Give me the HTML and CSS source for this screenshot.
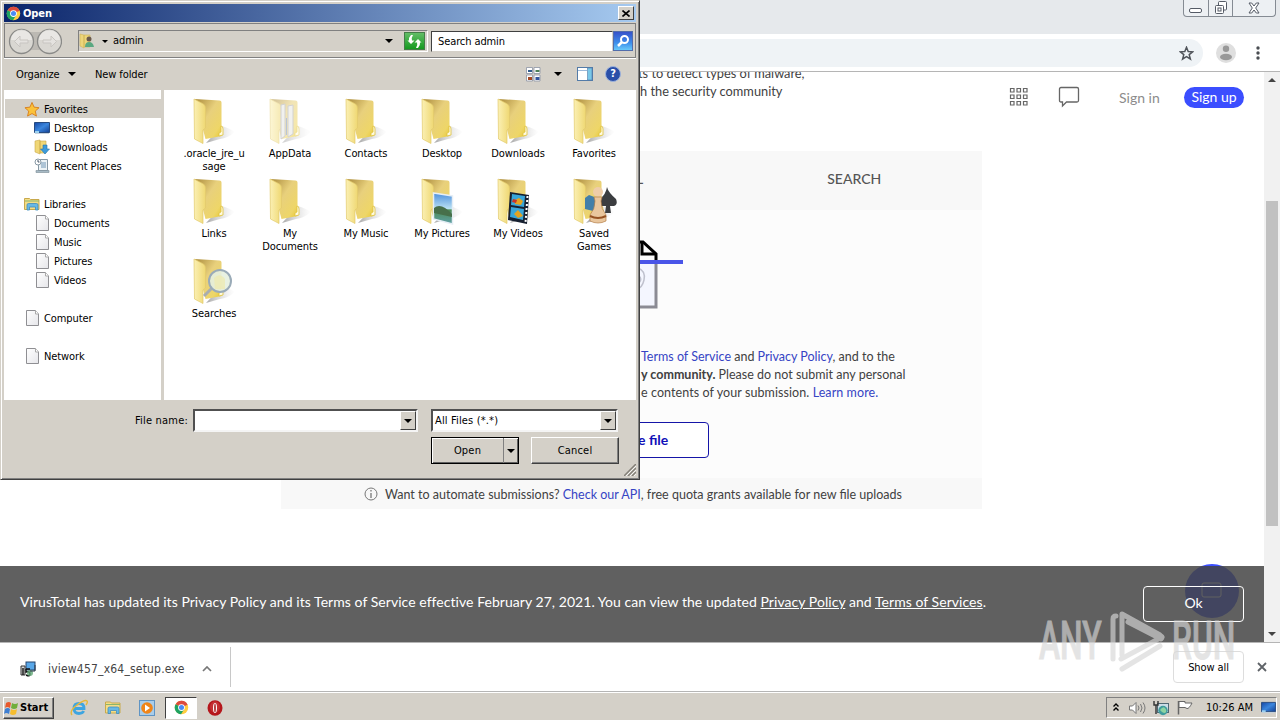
FILE: index.html
```html
<!DOCTYPE html>
<html>
<head>
	<meta charset="utf-8">
	<title>VirusTotal</title>
	<link rel="stylesheet" href="styles.css">
</head>
<body>
	<!-- shared icons -->
	<svg class="defs" width="0" height="0">
		<defs>
			<linearGradient id="gFront" x1="0" x2="1" y1="0" y2="0"><stop offset="0" stop-color="#fbf0b4"/><stop offset="1" stop-color="#efd873"/></linearGradient>
			<linearGradient id="gBack" x1="0" x2="1" y1="0" y2="1"><stop offset=".1" stop-color="#b89a4a"/><stop offset=".45" stop-color="#e8d07c"/><stop offset=".8" stop-color="#eed668"/><stop offset="1" stop-color="#e6c62e"/></linearGradient>
			<linearGradient id="gShade" x1="0" x2="1" y1="0" y2="0"><stop offset="0" stop-color="#888" stop-opacity=".75"/><stop offset="1" stop-color="#ccc" stop-opacity="0"/></linearGradient>
			<linearGradient id="gScreen" x1="0" x2="1" y1="0" y2="1"><stop offset="0" stop-color="#1547a5"/><stop offset=".5" stop-color="#3b86dd"/><stop offset="1" stop-color="#123f94"/></linearGradient>
			<linearGradient id="gPage" x1="0" x2="1" y1="0" y2="1"><stop offset="0" stop-color="#fff"/><stop offset="1" stop-color="#e6e6ea"/></linearGradient>
			<linearGradient id="gPhoto" x1="0" x2="0" y1="0" y2="1"><stop offset="0" stop-color="#4c8fdc"/><stop offset=".5" stop-color="#b9e0f3"/><stop offset=".55" stop-color="#4d8b55"/><stop offset="1" stop-color="#5fa0a8"/></linearGradient>
		</defs>
		<symbol id="folder" viewBox="0 0 48 48">
			<path d="M16 45L32 28q9 3 13 6-7 6-15 7z" fill="url(#gShade)"/>
			<path d="M5 1l24.500 1.500q2 0 2 2V38l-16 3z" fill="url(#gBack)"/>
			<path d="M4 1l9.500 5q2 1.500 2 4v20l-2.500 2v13.500L4.500 41z" fill="url(#gFront)" stroke="#e3ca6c" stroke-width=".7"/>
			<path d="M31 28q2 0 2 3v6l-4 1v-3l2-1z" fill="#fffbe0" stroke="#e0c33c" stroke-width=".8"/>
		</symbol>
		<symbol id="page" viewBox="0 0 16 16">
			<path d="M2.500.5h9l3 3.500v11.500h-12z" fill="url(#gPage)" stroke="#8f8f93"/>
			<path d="M11.500.5v3.500h3" fill="#fff" stroke="#aaa"/>
		</symbol>
		<symbol id="chrome" viewBox="0 0 16 16">
			<circle cx="8" cy="8" r="7.200" fill="#ffcd40"/>
			<path d="M8 8L1.700 4.400A7.200 7.200 0 0 1 14.500 5z" fill="#dd4b3e"/>
			<path d="M8 8L1.700 4.400A7.200 7.200 0 0 0 7.500 15.200L11 9.500z" fill="#1ea362"/>
			<circle cx="8" cy="8" r="3.600" fill="#fff"/><circle cx="8" cy="8" r="2.700" fill="#4a8af4"/>
		</symbol>
		<symbol id="screen" viewBox="0 0 16 14">
			<path d="M.5 1.500h15v10H.5z" fill="url(#gScreen)" stroke="#274b80"/>
			<path d="M1 12.500h14" stroke="#c8d3de"/><path d="M1 10h4v2H1z" fill="#9cd0ef"/>
		</symbol>
		<symbol id="shelf" viewBox="0 0 16 14">
			<path d="M.5 1.500h5l1 1h8.500v10H.5z" fill="#f4dd86" stroke="#c8a94c"/>
			<path d="M1 4h14" stroke="#8bb56c"/>
			<path d="M3 13V8q0-1.500 1.500-1.500h8Q14 6.500 14 8v5h-2.500v-3h-6v3z" fill="#68b8e4" stroke="#3d8dbf" stroke-width=".8"/>
		</symbol>
		<symbol id="down" viewBox="0 0 8 4"><path d="M0 0h8L4 4z"/></symbol>
	</svg>

	<div class="desktop">
		<div class="browser">
			<div class="titlebar">
				<div class="window-buttons">
					<span class="min"><svg width="13" height="6"><rect x=".5" y=".5" width="12" height="4" rx="1.500" fill="#fff" stroke="#555b66"/></svg></span>
					<span class="max"><svg width="14" height="14" fill="#fff" stroke="#555b66"><rect x="4.500" y=".5" width="8" height="8.500" rx="1"/><rect x="1.500" y="4.500" width="8" height="8" rx="1"/><rect x="4" y="7" width="3" height="3"/></svg></span>
					<span class="close"><svg width="12" height="12"><path d="M1 1h2.700L6 4l2.300-3H11L7.700 6l3.300 5H8.300L6 8l-2.300 3H1l3.300-5z" fill="#fff" stroke="#555b66"/></svg></span>
				</div>
			</div>
			<div class="address-row">
				<div class="omnibox">
					<svg width="15" height="15" viewBox="0 0 15 15"><path d="M7.500 1.300l1.700 4.200 4.500.3-3.500 2.800 1.200 4.400-3.900-2.400L3.600 13l1.200-4.400L1.300 5.800l4.500-.3z" fill="none" stroke="#50545a" stroke-width="1.500"/></svg>
				</div>
				<svg class="avatar" width="20" height="20"><circle cx="10" cy="10" r="10" fill="#dfdfdf"/><circle cx="10" cy="5.800" r="3.200" fill="#999"/><ellipse cx="10" cy="14" rx="6" ry="3.200" fill="#999"/></svg>
				<svg class="dots" width="4" height="14" fill="#4a4d52"><circle cx="2" cy="2" r="1.700"/><circle cx="2" cy="7" r="1.700"/><circle cx="2" cy="12" r="1.700"/></svg>
			</div>

			<div class="viewport">
				<div class="page">
					<div class="site-nav">
						<svg width="20" height="20" fill="none" stroke="#666" stroke-width="1.200"><path d="M1.500 1.500h3.500v3.500h-3.500zM8 1.500h3.500v3.500H8zM14.500 1.500H18v3.500h-3.500zM1.500 8h3.500v3.500h-3.500zM8 8h3.500v3.500H8zM14.500 8H18v3.500h-3.500zM1.500 14.500h3.500V18h-3.500zM8 14.500h3.500V18H8zM14.500 14.500H18V18h-3.500z"/></svg>
						<svg class="chat" width="22" height="22" fill="none" stroke="#666" stroke-width="1.300"><path d="M3 1.500h16q1.500 0 1.500 1.500v11.500q0 1.500-1.500 1.500H8.500L4.500 20v-4H3q-1.500 0-1.500-1.500V3Q1.500 1.500 3 1.500z"/></svg>
						<a class="sign-in">Sign in</a>
						<a class="sign-up">Sign up</a>
					</div>
					<div class="intro">
						<div class="line-1">ts to detect types of malware,</div>
						<div class="line-2">h the security community</div>
					</div>
					<div class="card">
						<div class="tabs"><span class="tab-url">L</span><span class="tab-search">SEARCH</span></div>
						<div class="upload">
							<svg class="file-art" width="64" height="72" fill="none">
								<path d="M0 22h36v45H0" fill="#f4f6ff" stroke="#8b8b94" stroke-width="3"/>
								<path d="M0 2h23l13 12v8" stroke="#000" stroke-width="3"/><path d="M22 2v12h14" stroke="#000" stroke-width="3"/>
								<path d="M18 28q8 3 6 12t-8 9M18 35q5 4 1 8" stroke="#bfc1ce" stroke-width="1.500"/>
								<path d="M0 22h63" stroke="#4a55e8" stroke-width="4"/>
							</svg>
							<div class="terms">
								<div class="t1"><a>Terms of Service</a> and <a>Privacy Policy</a>, and to the</div>
								<div class="t2"><b>y community.</b> Please do not submit any personal</div>
								<div class="t3">e contents of your submission. <a>Learn more.</a></div>
							</div>
							<div class="choose">e file</div>
						</div>
						<div class="api">
							<svg width="14" height="14" fill="none" stroke="#777"><circle cx="7" cy="7" r="6"/><path d="M7 6v5M7 3v1.500" stroke-width="1.300"/></svg>
							<span>Want to automate submissions? <a>Check our API</a>, free quota grants available for new file uploads</span>
						</div>
					</div>
					<div class="fab"><svg width="22" height="18" fill="none" stroke="#fff"><rect x="1" y="1" width="19" height="14" rx="2"/></svg></div>
					<div class="notice">
						<span class="notice-text">VirusTotal has updated its Privacy Policy and its Terms of Service effective February 27, 2021. You can view the updated <u>Privacy Policy</u> and <u>Terms of Services</u>.</span>
						<div class="ok">Ok</div>
					</div>
				</div>
				<div class="scrollbar">
					<svg width="8" height="4"><path d="M0 4h8L4 0z" fill="#444"/></svg>
					<div class="thumb"></div>
					<svg width="8" height="4"><path d="M0 0h8L4 4z" fill="#444"/></svg>
				</div>
			</div>

			<div class="downloads">
				<div class="download">
					<svg width="16" height="16"><rect x="6" y="1" width="9" height="8" fill="#58a7e8" stroke="#26466e"/><path d="M1 5h4v9H1z" fill="#d8d8d8" stroke="#333"/><path d="M3 7v7M6 8h4M6 8v3q4-1 4 2t-4 1" stroke="#111" stroke-width="1.400" fill="none"/><circle cx="10" cy="12" r="3" fill="#60a875" opacity=".8"/><path d="M10 10h5V4" fill="none" stroke="#293747"/></svg>
					<span>iview457_x64_setup.exe</span>
					<svg width="10" height="6"><path d="M1 5l4-4 4 4" fill="none" stroke="#777" stroke-width="1.700"/></svg>
				</div>
				<div class="show-all">Show all</div>
				<svg class="close-bar" width="10" height="10"><path d="M1 1l8 8M9 1L1 9" stroke="#5f6368" stroke-width="1.800"/></svg>
			</div>
		</div>

		<div class="taskbar">
			<div class="start">
				<svg width="15" height="14"><path d="M2 2q3-2 5 0L6 7Q3 5 1 7z" fill="#e8592c"/><path d="M8 2q3 2 6 0l-1 5q-3 2-6 0z" fill="#6fae3b"/><path d="M1 8q3-2 5 0l-1 5q-3-2-5 0z" fill="#3e7fd2"/><path d="M7 8q3 2 6 0l-1 5q-3 2-6 0z" fill="#f5bd2e"/></svg>
				<span>Start</span>
			</div>
			<div class="quick ie"><svg width="18" height="18" fill="none"><path d="M4 9.500h10q0-5-5-5t-5 5 5 5q3.500 0 4.700-2.500" stroke="#3ea5e0" stroke-width="2.800"/><path d="M2 16q-3-4 5-10t10-4q1 1-1 4" stroke="#e5b83a" stroke-width="1.400"/></svg></div>
			<div class="quick"><svg width="16" height="15"><use href="#shelf"/></svg></div>
			<div class="quick"><svg width="16" height="16"><rect x=".5" y=".5" width="15" height="15" fill="#a9cdea" stroke="#5f94c4"/><circle cx="8" cy="8" r="5.800" fill="#f08519"/><path d="M6 4.500l5 3.500-5 3.500z" fill="#fff"/></svg></div>
			<div class="quick active"><svg width="15" height="15"><use href="#chrome"/></svg></div>
			<div class="quick"><svg width="16" height="16"><ellipse cx="8" cy="8" rx="7.500" ry="7.700" fill="#b5161b"/><ellipse cx="8" cy="7" rx="5" ry="5.800" fill="#d6474a" opacity=".5"/><ellipse cx="8" cy="8" rx="2" ry="5" fill="#fff"/><ellipse cx="8" cy="8" rx=".8" ry="4.500" fill="#a31216"/></svg></div>
			<div class="tray">
				<svg width="6" height="9" fill="none" stroke="#000" stroke-width="1.400"><path d="M.5 3.500L3 1l2.500 2.500M.5 7.500L3 5l2.500 2.500"/></svg>
				<svg class="volume" width="17" height="14" fill="none" stroke="#777"><path d="M.5 5h3L7 1.500v11L3.500 9h-3z" fill="#fff"/><path d="M9 4.500q2 2.500 0 5M11.500 3q3 4 0 8M14 1.500q4 5.500 0 11"/></svg>
				<svg class="network" width="16" height="16"><rect x="4.500" y="3.500" width="11" height="9" fill="#ccdde6" stroke="#506875"/><path d="M1 1v4h4V1M3 5v9" fill="none" stroke="#333" stroke-width="1.400"/><circle cx="10" cy="10.500" r="4.700" fill="#3e9c9d"/><path d="M7 10q3-4 5-2t1 4-4 0z" fill="#8ed3a1"/></svg>
				<svg class="flag" width="16" height="15"><path d="M1.500 1v13.500" stroke="#666" stroke-width="1.500"/><path d="M2 1.500h6v1.500h7q-3 6-5 5.500L8 7.500H2z" fill="#fff" stroke="#666"/></svg>
				<span>10:26 AM</span>
				<svg class="peek" width="15" height="13"><use href="#screen"/></svg>
			</div>
		</div>

		<div class="dialog">
			<div class="caption">
				<svg width="15" height="15"><use href="#chrome"/></svg><b>Open</b>
				<div class="x"><svg width="8" height="7"><path d="M.5.5l7 6M7.500.5l-7 6" stroke="#000" stroke-width="1.600"/></svg></div>
			</div>
			<div class="nav-row">
				<svg width="54" height="27" class="travel"><rect x="12" y="4" width="28" height="18" fill="#bcb9b3"/><g fill="#d9d7d2" stroke="#8a8a88" stroke-width="1.300"><circle cx="13.500" cy="13.500" r="12"/><circle cx="41.500" cy="13.500" r="12"/></g><path d="M3 12a10.500 10.500 0 0 1 21 0zM31 12a10.500 10.500 0 0 1 21 0z" fill="#efeeeb" opacity=".7"/><path d="M12 8l-5.500 5.500L12 19v-4h8v-3h-8zM43 8l5.500 5.500L43 19v-4h-8v-3h8z" fill="#e4e2df" stroke="#c8c5c1"/></svg>
				<div class="address">
					<svg width="16" height="16"><path d="M1 1l4 1v13l-4-2zM5 2h6v12H5z" fill="#edd57a" stroke="#cfb256" stroke-width=".6"/><circle cx="10" cy="6" r="2.500" fill="#6b5a4c"/><path d="M6 14q0-5 4-5t5 5z" fill="#5aa881"/></svg>
					<svg class="tri" width="6" height="3"><use href="#down"/></svg>
					<span>admin</span>
					<svg class="tri drop" width="8" height="4"><use href="#down"/></svg>
					<div class="refresh"><svg width="17" height="15" fill="#fff"><path d="M5 1h2q-2 3-1 5.500h2.500L5 10 1.500 6.500H3Q2.500 3.500 5 1zM12 14h-2q2-3 1-5.500H8.500L12 5l3.500 3.500H14q.5 3-2 5.500z"/></svg></div>
				</div>
				<div class="search">Search admin</div>
				<div class="search-go"><svg width="14" height="14" fill="none" stroke="#fff"><circle cx="8.500" cy="5.500" r="3.500" stroke-width="2"/><path d="M6 8l-4 4" stroke-width="2.500"/></svg></div>
			</div>
			<div class="tools">
				<span>Organize</span><svg class="org" width="8" height="4"><use href="#down"/></svg><span class="new">New folder</span>
				<svg class="views" width="15" height="15"><path d="M.5.5h6v6h-6zM8 .5h6v6H8zM.5 8h6v6h-6zM8 8h6v6H8z" fill="#fff" stroke="#8c93a3" stroke-width=".8"/><path d="M2 3h4v2H2z" fill="#315c8d"/><path d="M9.500 3h4v2h-4z" fill="#4b7e56"/><path d="M2 10h4v3H2z" fill="#a34722"/><path d="M9.500 10h4v3h-4z" fill="#31529b"/></svg>
				<svg class="views-drop" width="8" height="4"><use href="#down"/></svg>
				<svg class="preview" width="16" height="14"><rect x=".5" y=".5" width="15" height="13" fill="#fff" stroke="#537ba8"/><path d="M1 3.500h9" stroke="#9cb9d9"/><rect x="10.500" y="1" width="4.500" height="12" fill="#79c8e8" stroke="#537ba8" stroke-width=".6"/></svg>
				<div class="help">?</div>
			</div>
			<div class="panes">
				<div class="tree">
					<div class="node selected"><svg width="16" height="17" viewBox="0 0 17 17"><path d="M8.500 1l2.200 5 5.300.6-4 3.600 1.200 5.300-4.700-2.700-4.700 2.700L5 10.200 1 6.600 6.300 6z" fill="#fbc23a" stroke="#d87f1d"/></svg>Favorites</div>
					<div class="node sub"><svg width="16" height="14"><use href="#screen"/></svg>Desktop</div>
					<div class="node sub"><svg width="16" height="16"><path d="M1 2l5-1v14l-5-2zM6 2h6v12H6z" fill="#f0d777" stroke="#c9aa4a" stroke-width=".6"/><path d="M9 6h4v4h2.500L11 15 6.500 10H9z" fill="#3d9bdb" stroke="#2474ac" stroke-width=".6"/></svg>Downloads</div>
					<div class="node sub"><svg width="16" height="16"><path d="M4.500 1.500h9v11h-9z" fill="#edf3f6" stroke="#8798a4"/><path d="M7 5h5M7 7h5M7 9h5" stroke="#6f95b5"/><path d="M2 12.500h13v2H2z" fill="#a7bac5" stroke="#7b8c96" stroke-width=".6"/><circle cx="4" cy="4" r="3" fill="#fff" stroke="#8798a4"/><path d="M4 2v2h1.500" stroke="#456" fill="none"/></svg>Recent Places</div>
					<div class="node gap"><svg width="16" height="14"><use href="#shelf"/></svg>Libraries</div>
					<div class="node sub"><svg width="16" height="16"><use href="#page"/></svg>Documents</div>
					<div class="node sub"><svg width="16" height="16"><use href="#page"/></svg>Music</div>
					<div class="node sub"><svg width="16" height="16"><use href="#page"/></svg>Pictures</div>
					<div class="node sub"><svg width="16" height="16"><use href="#page"/></svg>Videos</div>
					<div class="node gap"><svg width="16" height="16"><use href="#page"/></svg>Computer</div>
					<div class="node gap"><svg width="16" height="16"><use href="#page"/></svg>Network</div>
				</div>
				<div class="files">
					<div class="file"><svg width="48" height="48"><use href="#folder"/></svg>.oracle_jre_u<br>sage</div>
					<div class="file"><svg width="48" height="48"><g opacity=".55"><use href="#folder"/></g><path d="M15 7l4-1v32l-4 3zM22 8l5-1v29l-5 3z" fill="#f1f1ee" stroke="#d2d2d2"/><path d="M20.500 20v17" stroke="#b9c4d6"/></svg>AppData</div>
					<div class="file"><svg width="48" height="48"><use href="#folder"/></svg>Contacts</div>
					<div class="file"><svg width="48" height="48"><use href="#folder"/></svg>Desktop</div>
					<div class="file"><svg width="48" height="48"><use href="#folder"/></svg>Downloads</div>
					<div class="file"><svg width="48" height="48"><use href="#folder"/></svg>Favorites</div>
					<div class="file"><svg width="48" height="48"><use href="#folder"/></svg>Links</div>
					<div class="file"><svg width="48" height="48"><use href="#folder"/></svg>My<br>Documents</div>
					<div class="file"><svg width="48" height="48"><use href="#folder"/></svg>My Music</div>
					<div class="file"><svg width="48" height="48"><use href="#folder"/><path d="M15.500 15l19 3v28l-19-5z" fill="url(#gPhoto)" stroke="#e6eef5" stroke-width="1.500"/><path d="M16 30q7-6 18 6v3l-18-4z" fill="#476f4a"/></svg>My Pictures</div>
					<div class="file"><svg width="48" height="48"><use href="#folder"/><path d="M16 14l19 3-2 29-19-4z" fill="#172030"/><path d="M18 16l13 2-1 11-13-2zM17 29l13 2-1 11-13-3z" fill="#38a6d9"/><path d="M21 22l4-2 4 3-2 4-6-1zM20 36l4-4 5 6-5 2z" fill="#e4a31f"/><path d="M19 21l4 1-1 3-4-1z" fill="#c83428"/><path d="M33.500 18l-2 27" stroke="#fff" stroke-width="2" stroke-dasharray="2 2"/></svg>My Videos</div>
					<div class="file"><svg width="48" height="48"><use href="#folder"/><path d="M15 20l4-3 8 3v14l-12-3z" fill="#427fa9"/><path d="M37 9q1 5 9 12 3 8-6 7l1 7h-6l1-7q-9 1-6-7 6-5 7-12z" fill="#3b3d40"/><circle cx="28" cy="14" r="5" fill="#efcda8"/><path d="M24 19h8l-1 4q0 8 5 14v6q-8 4-16 0v-6q5-6 5-14z" fill="#e9c69d" stroke="#b57e48" stroke-width=".7"/><path d="M20 38q8 4 16 0" stroke="#965222" fill="none" stroke-width="2"/></svg>Saved<br>Games</div>
					<div class="file"><svg width="48" height="48"><use href="#folder"/><path d="M14 38l9-9" stroke="#a9adb0" stroke-width="3"/><circle cx="30" cy="23" r="11" fill="#e5efdf" fill-opacity=".9" stroke="#9aabb8" stroke-width="2"/><path d="M24 20q6-6 11 1v10H25z" fill="#eee9ae" opacity=".7"/></svg>Searches</div>
				</div>
			</div>
			<div class="form">
				<label>File name:</label>
				<div class="combo name"><i><svg width="8" height="4"><use href="#down"/></svg></i></div>
				<div class="combo type"><span>All Files (*.*)</span><i><svg width="8" height="4"><use href="#down"/></svg></i></div>
			</div>
			<div class="actions">
				<div class="button open"><span>Open</span><i><svg width="8" height="4"><use href="#down"/></svg></i></div>
				<div class="button cancel">Cancel</div>
			</div>
			<svg class="grip" width="12" height="12"><path d="M0 12L12 0M4 12l8-8M8 12l4-4" stroke="#848078" stroke-width="1.500"/><path d="M2 12L12 2M6 12l6-6M10 12l2-2" stroke="#fff" stroke-width=".8"/></svg>
		</div>

		<div class="watermark">
			<span>ANY</span>
			<svg width="58" height="64" fill="none" stroke="#d7d7d7" stroke-width="5" stroke-linejoin="round" stroke-linecap="round"><path d="M5 50V10q0-3 3-3M14 46V5l38 21q3 2 1 4L20 13"/><path d="M13 50l41-22M14 60l38-23" /></svg>
			<span>RUN</span>
		</div>
	</div>
</body>
</html>
```

FILE: styles.css
```css
* {
	box-sizing: border-box;
}
body {
	margin: 0;
	background: #fff;
	overflow: hidden;
}
svg {
	display: block;
	flex: none;
}
.defs {
	position: absolute;
}
.desktop {
	position: relative;
	width: 1280px;
	height: 720px;
	overflow: hidden;
	display: flex;
	flex-direction: column;
	font-family: "DejaVu Sans Condensed", "DejaVu Sans", sans-serif;
	font-size: 11px;
	white-space: nowrap;
	color: #000;
}
a {
	color: #3644c4;
}

/* browser window */
.browser {
	height: 692px;
	display: flex;
	flex-direction: column;
}
.titlebar {
	height: 34px;
	background: #e6e9ec;
	display: flex;
	justify-content: flex-end;
	padding-right: 4px;
}
.window-buttons {
	display: flex;
	height: 17px;
	width: 93px;
	border: 1px solid #858b93;
	border-top: 0;
	border-radius: 0 0 4px 4px;
	background: #edf0f3;
}
.window-buttons span {
	display: flex;
	align-items: center;
	justify-content: center;
	width: 25px;
	border-right: 1px solid #858b93;
}
.window-buttons .min {
	padding-top: 5px;
}
.window-buttons .close {
	width: 42px;
	border: 0;
}
.address-row {
	height: 38px;
	display: flex;
	align-items: center;
	padding: 1px 20px 0 0;
	border-bottom: 1px solid #b5b5b5;
	background: #fff;
}
.omnibox {
	flex: 1;
	height: 28px;
	display: flex;
	align-items: center;
	justify-content: flex-end;
	padding-right: 9px;
	background: #eff3f6;
	border-radius: 0 14px 14px 0;
}
.avatar {
	margin-left: 13px;
}
.dots {
	margin-left: 20px;
}
.viewport {
	height: 570px;
	display: flex;
}
.page {
	position: relative;
	width: 1264px;
	overflow: hidden;
	font-family: Lato, sans-serif;
	color: #414141;
}
.scrollbar {
	width: 16px;
	background: #f1f1f1;
	display: flex;
	flex-direction: column;
	align-items: center;
	padding: 6px 0;
}
.thumb {
	width: 12px;
	height: 325px;
	margin: 119px 0 106px;
	background: #c1c1c1;
}
.site-nav {
	position: absolute;
	top: 10px;
	right: 20px;
	height: 30px;
	display: flex;
	align-items: center;
	font-size: 14px;
}
.chat {
	margin-left: 29px;
}
.sign-in {
	margin-left: 39px;
	width: 41px;
	color: #8c8c8c;
}
.sign-up {
	margin-left: 24px;
	width: 60px;
	height: 21px;
	line-height: 20px;
	border-radius: 11px;
	background: #3b4eff;
	color: #fff;
	text-align: center;
}
.intro {
	display: flow-root;
	height: 79px;
	padding-left: 638px;
	font-size: 12.800px;
	line-height: 18px;
}
.line-1 {
	margin-top: -8px;
}
.line-2 {
	margin-left: 2px;
}
.card {
	width: 701px;
	margin-left: 281px;
	background: #fcfcfc;
}
.tabs {
	height: 59px;
	display: flex;
	align-items: center;
	padding: 0 0 5px 355px;
	background: #f8f8f8;
	font-size: 14px;
	font-weight: 500;
	color: #555;
}
.tab-search {
	margin-left: 184px;
}
.upload {
	height: 268px;
	padding: 30px 0 0 339px;
}
.terms {
	margin: 36px 0 0 21px;
	font-size: 12.500px;
	line-height: 18px;
}
.t3 {
	letter-spacing: .08px;
}
.choose {
	width: 89px;
	height: 36px;
	margin-top: 20px;
	padding-left: 17px;
	border: 1px solid #1515a8;
	border-radius: 4px;
	background: #fff;
	font-size: 14px;
	font-weight: bold;
	line-height: 33px;
	color: #1010b8;
}
.api {
	height: 31px;
	display: flex;
	align-items: center;
	gap: 7px;
	padding: 1px 0 0 83px;
	background: #f8f8f8;
	font-size: 12.500px;
}
.fab {
	position: absolute;
	left: 1185px;
	top: 492px;
	width: 54px;
	height: 54px;
	border-radius: 50%;
	background: #3b4eff;
	display: flex;
	align-items: center;
	justify-content: center;
}
.notice {
	position: absolute;
	left: 0;
	right: 0;
	bottom: 0;
	height: 76px;
	padding: 0 20px;
	display: flex;
	align-items: center;
	justify-content: space-between;
	background: rgba(68, 68, 68, .85);
	color: #fff;
	font-size: 14px;
}
.notice-text {
	padding-bottom: 6px;
	letter-spacing: .05px;
}
.ok {
	width: 101px;
	height: 36px;
	border: 1px solid #fff;
	border-radius: 4px;
	line-height: 32px;
	text-align: center;
}
.downloads {
	height: 50px;
	display: flex;
	align-items: center;
	padding-right: 13px;
	border-top: 1px solid #b5b5b5;
	border-bottom: 1px solid #b5b5b5;
	background: #fff;
}
.download {
	height: 40px;
	width: 231px;
	padding: 3px 0 0 20px;
	display: flex;
	align-items: center;
	border-right: 1px solid #c8c8c8;
	font-size: 12px;
	color: #444;
}
.download span {
	width: 138px;
	margin: 0 16px 0 12px;
	letter-spacing: .2px;
}
.show-all {
	width: 71px;
	height: 32px;
	margin-left: auto;
	border: 1px solid #ddd;
	border-radius: 4px;
	line-height: 31px;
	letter-spacing: -.1px;
	text-align: center;
}
.close-bar {
	margin-left: 13px;
}

/* taskbar */
.taskbar {
	height: 28px;
	display: flex;
	align-items: center;
	padding: 3px 3px 1px;
	border-top: 1px solid #fff;
	background: #d4d0c8;
}
.start {
	width: 51px;
	height: 22px;
	display: flex;
	align-items: center;
	gap: 1px;
	border: 1px solid;
	border-color: #fff #404040 #404040 #fff;
	box-shadow: inset -1px -1px 0 #808080;
	font-weight: bold;
}
.quick {
	width: 34px;
	height: 22px;
	display: flex;
	align-items: center;
	justify-content: center;
}
.ie {
	margin-left: 8px;
}
.active {
	width: 32px;
	margin: 0 1px;
	border: 1px solid;
	border-color: #404040 #fff #fff #404040;
	background: #fff;
}
.tray {
	width: 171px;
	height: 21px;
	margin-left: auto;
	display: flex;
	align-items: center;
	padding-left: 6px;
	border: 1px solid;
	border-color: #808080 #fff #fff #808080;
}
.volume {
	margin-left: 10px;
}
.network {
	margin-left: 7px;
}
.flag {
	margin-left: 8px;
}
.tray span {
	width: 47px;
	margin-left: 13px;
}
.peek {
	margin-left: 8px;
}

/* file dialog */
.dialog {
	position: absolute;
	left: 0;
	top: 0;
	width: 640px;
	height: 480px;
	padding: 3px;
	border: 1px solid;
	border-color: #d4d0c8 #404040 #404040 #d4d0c8;
	box-shadow: inset 1px 1px 0 #fff, inset -1px -1px 0 #808080;
	background: #d4d0c8;
	letter-spacing: -.1px;
}
.caption {
	height: 18px;
	display: flex;
	align-items: center;
	padding: 0 2px;
	background: linear-gradient(to right, #0a246a, #a6caf0);
	color: #fff;
}
.caption b {
	margin-left: 2px;
}
.x {
	width: 16px;
	height: 14px;
	margin-left: auto;
	display: flex;
	align-items: center;
	justify-content: center;
	border: 1px solid;
	border-color: #fff #404040 #404040 #fff;
	background: #d4d0c8;
}
.nav-row {
	height: 35px;
	margin-top: 1px;
	display: flex;
	align-items: center;
	padding: 1px 0 0 3px;
	border: 1px solid #808080;
	box-shadow: 0 1px 0 #fff;
}
.address {
	width: 350px;
	height: 22px;
	margin-left: 16px;
	display: flex;
	align-items: center;
	border: 1px solid;
	border-color: #808080 #fff #fff #808080;
}
.tri {
	margin-left: 7px;
}
.address span {
	margin-left: 5px;
	padding-bottom: 1px;
}
.drop {
	margin-left: auto;
}
.refresh {
	width: 21px;
	height: 18px;
	margin: 0 2px 0 11px;
	display: flex;
	align-items: center;
	justify-content: center;
	border: 1px solid #447c48;
	background: linear-gradient(#62bd66, #159a20);
}
.search {
	width: 182px;
	height: 21px;
	margin-left: 3px;
	padding-left: 6px;
	border: 1px solid;
	border-color: #404040 #d4d0c8 #d4d0c8 #404040;
	background: #fff;
	line-height: 19px;
}
.search-go {
	width: 20px;
	height: 20px;
	display: flex;
	align-items: center;
	justify-content: center;
	border: 1px solid #526dab;
	background: linear-gradient(#3651ca, #3d8eeb 60%, #67c9fa);
}
.tools {
	height: 32px;
	display: flex;
	align-items: center;
	padding: 0 15px 0 12px;
}
.tools span {
	width: 44px;
}
.org {
	margin-left: 8px;
}
.tools .new {
	width: 52px;
	margin-left: 19px;
}
.views {
	margin-left: auto;
}
.views-drop {
	margin: 0 15px 0 13px;
}
.help {
	width: 16px;
	height: 16px;
	margin-left: 12px;
	border: 1px solid #9cb2dc;
	border-radius: 50%;
	background: #2a4fa8;
	color: #fff;
	font-weight: bold;
	line-height: 14px;
	text-align: center;
}
.panes {
	height: 310px;
	display: flex;
	background: #fff;
}
.tree {
	width: 160px;
	padding: 9px 0 0 1px;
	border-right: 3px solid #d4d0c8;
}
.node {
	height: 19px;
	display: flex;
	align-items: center;
	gap: 4px;
	padding: 1px 0 0 19px;
}
.node.sub {
	padding-left: 29px;
}
.node.gap {
	margin-top: 19px;
}
.selected {
	background: #d4d0c8;
}
.files {
	flex: 1;
	display: grid;
	grid-template-columns: repeat(6, 76px);
	grid-auto-rows: 80px;
	padding: 8px 0 0 12px;
}
.file {
	text-align: center;
	line-height: 13px;
}
.file svg {
	margin: 0 auto 1px;
}
.form {
	height: 32px;
	display: flex;
	align-items: flex-end;
}
.form label {
	width: 184px;
	padding-bottom: 5px;
	letter-spacing: .2px;
	text-align: right;
}
.combo {
	height: 23px;
	display: flex;
	align-items: center;
	border: 2px solid;
	border-color: #505050 #f4f4f4 #f4f4f4 #505050;
	background: #fff;
}
.type span {
	letter-spacing: .15px;
}
.combo i,
.button i {
	display: flex;
	align-items: center;
	justify-content: center;
}
.combo i {
	width: 16px;
	height: 19px;
	margin-left: auto;
	border: 1px solid;
	border-color: #fff #404040 #404040 #fff;
	background: #d4d0c8;
}
.name {
	width: 225px;
	margin-left: 5px;
}
.type {
	width: 187px;
	margin-left: 13px;
	padding-left: 2px;
}
.actions {
	display: flex;
	margin: 5px 0 0 427px;
	gap: 12px;
	letter-spacing: .2px;
}
.button {
	width: 88px;
	height: 27px;
	border: 1px solid;
	border-color: #fff #404040 #404040 #fff;
	box-shadow: inset -1px -1px 0 #808080;
	line-height: 26px;
	text-align: center;
}
.open {
	display: flex;
	border-color: #000;
	box-shadow: inset 1px 1px 0 #fff, inset -1px -1px 0 #606060;
}
.open span {
	flex: 1;
}
.open i {
	width: 15px;
	border-left: 1px solid #808080;
}
.grip {
	position: absolute;
	right: 3px;
	bottom: 3px;
}

/* overlay mark */
.watermark {
	position: absolute;
	left: 1039px;
	top: 609px;
	width: 194px;
	height: 64px;
	display: flex;
	align-items: center;
	gap: 6px;
	opacity: .65;
	color: #d7d7d7;
	font: 500 53px/40px Roboto, sans-serif;
}
.watermark span {
	width: 63px;
	transform: scaleX(.6);
	transform-origin: left;
	-webkit-text-stroke: 1px #d7d7d7;
}
```
